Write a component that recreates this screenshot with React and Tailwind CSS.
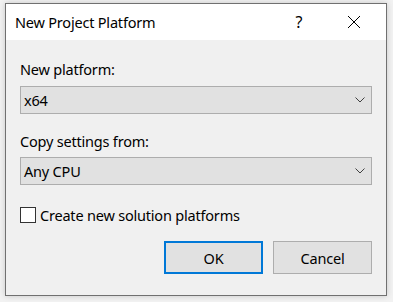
import React from 'react'

const font = { fontFamily: '"Segoe UI", "Noto Sans", "Open Sans", sans-serif' }

const Chevron = () => (
  <svg width="10" height="6" viewBox="0 0 10 6" className="shrink-0">
    <path d="M0.5 0.5 L5 5 L9.5 0.5" fill="none" stroke="#404040" strokeWidth="1" />
  </svg>
)

const Select = ({ value }) => (
  <div className="flex h-[28px] items-center justify-between border border-[#adadad] bg-[#e1e1e1] pl-[3px] pr-[6px]">
    <span className="text-[14.5px] leading-[20px] tracking-[-0.2px] text-black">{value}</span>
    <Chevron />
  </div>
)

export default function App() {
  return (
    <div className="h-[302px] w-[393px] bg-[#f2f2f2] pl-[5px] pt-[3px]" style={font}>
      <div className="flex h-[293px] w-[382px] flex-col border border-[#707070] bg-[#f0f0f0] shadow-[0_0_6px_rgba(0,0,0,0.18)]">
        {/* Title bar */}
        <div className="flex h-[36px] items-center bg-white pl-[9px]">
          <span className="flex-1 text-[14.5px] leading-[20px] tracking-[-0.2px] text-black">New Project Platform</span>
          <span className="w-[46px] text-center text-[16px] leading-[20px] text-black">?</span>
          <div className="flex w-[64px] items-center justify-center">
            <svg width="14" height="14" viewBox="0 0 14 14">
              <path d="M1 1 L13 13 M13 1 L1 13" stroke="#000" strokeWidth="1" />
            </svg>
          </div>
        </div>

        {/* Body */}
        <div className="flex flex-col px-[14px] pt-[19px] text-[14.5px] leading-[20px] tracking-[-0.2px] text-black">
          <span>New platform:</span>
          <div className="mt-[7px]">
            <Select value="x64" />
          </div>
          <span className="mt-[17px]">Copy settings from:</span>
          <div className="mt-[6px]">
            <Select value="Any CPU" />
          </div>
          <label className="mt-[20px] flex items-center gap-[4px]">
            <span className="h-[16px] w-[16px] border border-[#333333] bg-white" />
            <span>Create new solution platforms</span>
          </label>
          <div className="mt-[16px] flex justify-end gap-[10px]">
            <button className="h-[33px] w-[99px] border-2 border-[#0078d7] bg-[#e1e1e1] tracking-[-0.2px] text-black">
              OK
            </button>
            <button className="h-[33px] w-[99px] border border-[#adadad] bg-[#e1e1e1] tracking-[-0.2px] text-black">
              Cancel
            </button>
          </div>
        </div>
      </div>
    </div>
  )
}
